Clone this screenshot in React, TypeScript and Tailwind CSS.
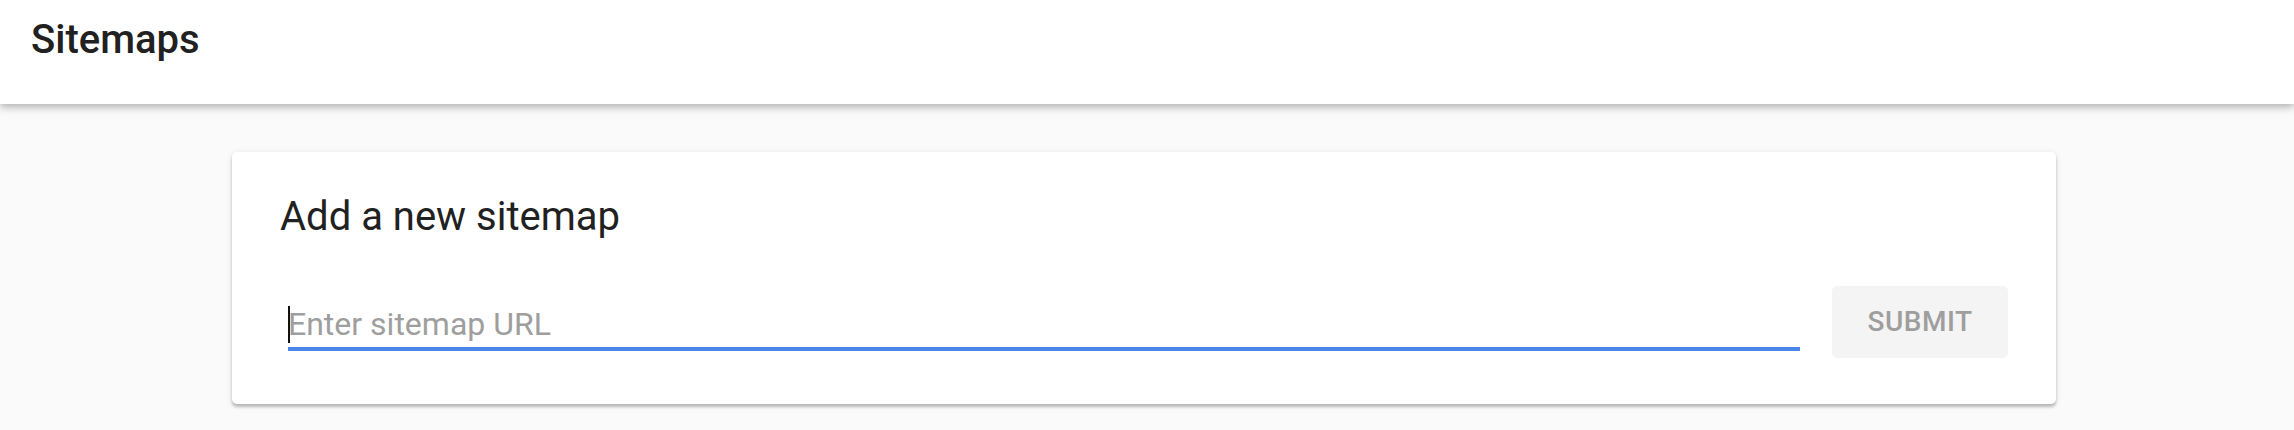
import React from "react";

const App = () => {
  return (
    <div className="min-h-screen bg-[#fafafa] font-['Roboto',sans-serif]">
      {/* Top bar */}
      <header className="relative z-10 h-[104px] bg-white pl-[31px] pt-[17px] shadow-[0_3px_8px_rgba(0,0,0,0.3)]">
        <h1 className="text-[40px] font-medium leading-[46px] text-[#212121]">Sitemaps</h1>
      </header>

      {/* Card */}
      <main className="pt-[48px] pl-[232px] pr-[238px]">
        <section className="flex flex-col rounded-[5px] bg-white pl-[48px] pr-[48px] pt-[41px] pb-[46px] shadow-[0_3px_3px_rgba(0,0,0,0.22),0_1px_6px_rgba(0,0,0,0.1)]">
          <h2 className="text-[40px] font-normal leading-[47px] text-[#212121]">Add a new sitemap</h2>

          <div className="mt-[46px] flex items-start gap-[32px]">
            <div className="relative ml-[8px] mt-[19px] flex-1">
              <input
                type="text"
                placeholder="Enter sitemap URL"
                className="block h-[46px] w-full border-b-[4px] border-[#4a86ea] bg-transparent pb-[4px] text-[32px] leading-[38px] text-[#212121] outline-none placeholder:text-[#9e9e9e]"
              />
              {/* text caret */}
              <span className="absolute left-0 top-[1px] h-[37px] w-[2px] bg-[#111]" />
            </div>
            <button className="h-[72px] w-[176px] rounded-[5px] bg-[#f4f4f4] text-[28px] font-medium tracking-[0.5px] text-[#9e9e9e]">
              SUBMIT
            </button>
          </div>
        </section>
      </main>
    </div>
  );
};

export default App;
